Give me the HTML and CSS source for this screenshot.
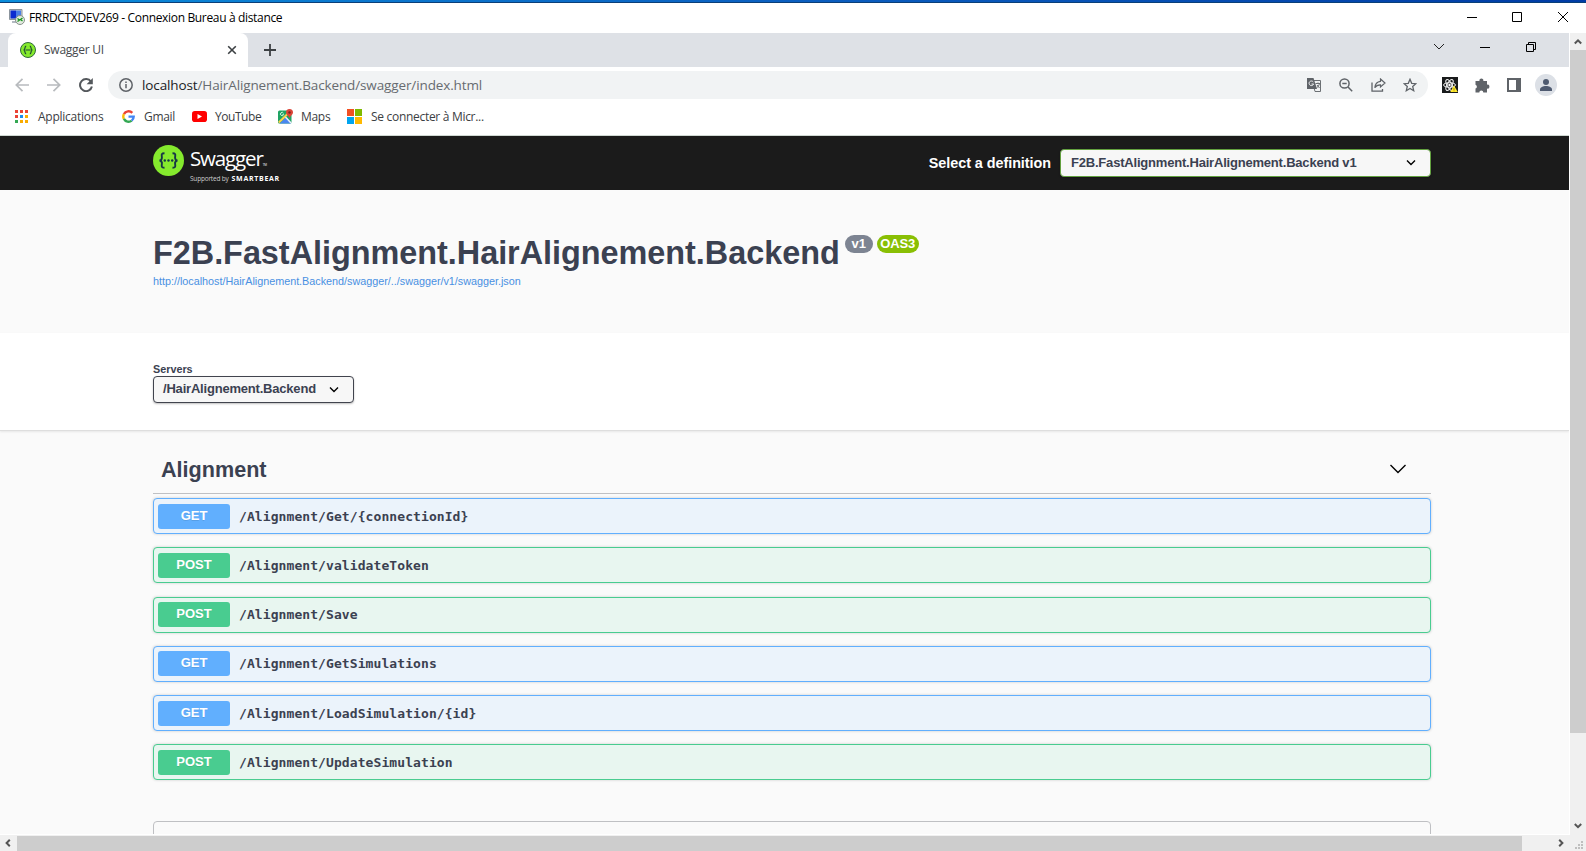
FILE: index.html
```html
<!DOCTYPE html>
<html lang="fr">
<head>
<meta charset="utf-8">
<title>FRRDCTXDEV269 - Connexion Bureau à distance</title>
<link rel="stylesheet" href="styles.css">
</head>
<body>
<div class="accent"></div>
<header class="titlebar">
  <svg class="rdp-icon" width="16" height="16" viewBox="0 0 16 16"><path d="M0.5 0.5H13V10.5H0.5z" fill="#c8cdd3" stroke="#8b949d"/><path d="M1.5 1.5H7V9.5H1.5z" fill="#0c2bd0"/><path d="M7 1.5H12V9.5H7z" fill="#4b7fe6"/><path d="M3 12h7v2H3z" fill="#b4bac2"/><circle cx="11" cy="11" r="4.5" fill="#e4ebe0" stroke="#87918b"/><path d="M8.5 9.500l2 1.500-2 1.500M13.500 9l-2 1.500 2 1.500" stroke="#16931c" stroke-width="1.300" fill="none"/></svg>
  <span class="window-name">FRRDCTXDEV269 - Connexion Bureau à distance</span>
  <div class="window-buttons">
    <svg width="10" height="10" viewBox="0 0 10 10"><path d="M0 5.500H10" stroke="#000"/></svg>
    <svg width="10" height="10" viewBox="0 0 10 10"><path d="M.5.5h9v9h-9z" stroke="#000" fill="none"/></svg>
    <svg width="10" height="10" viewBox="0 0 10 10"><path d="M0 0L10 10M10 0L0 10" stroke="#000"/></svg>
  </div>
</header>
<div class="workspace">
  <main class="remote">
    <div class="tabstrip">
      <div class="tab">
        <svg width="16" height="16" viewBox="0 0 16 16"><circle cx="8" cy="8" r="7.500" fill="#85ea2d" stroke="#2f6b3a"/><path d="M6.200 4.200C4.300 4.200 5.700 7.500 3.700 8c2 .5.600 3.800 2.500 3.800M9.800 4.200c1.900 0 .5 3.300 2.500 3.800-2 .5-.6 3.800-2.500 3.800M5.500 8h5" fill="none" stroke="#1d4a35" stroke-width="1.200"/></svg>
        <span class="tab-name">Swagger UI</span>
        <svg class="tab-close" width="10" height="10" viewBox="0 0 10 10"><path d="M1.200 1.200l7.600 7.600M8.800 1.200L1.200 8.800" stroke="#3c4043" stroke-width="1.600"/></svg>
      </div>
      <svg class="new-tab" width="12" height="12" viewBox="0 0 12 12"><path d="M6 0v12M0 6h12" stroke="#3c4043" stroke-width="1.800"/></svg>
      <div class="chrome-buttons">
        <svg width="10" height="10" viewBox="0 0 10 10"><path d="M0 2l5 5 5-5" stroke="#222" fill="none"/></svg>
        <svg width="10" height="10" viewBox="0 0 10 10"><path d="M0 5.500H10" stroke="#000"/></svg>
        <svg width="10" height="10" viewBox="0 0 10 10"><path d="M.5 2.500h7v7h-7zM2.500 2.500v-2h7v7h-2" stroke="#000" fill="none"/></svg>
      </div>
    </div>
    <div class="toolbar">
      <svg class="nav" width="14" height="14" viewBox="0 0 14 14"><path d="M14 7H1.500M7.500.8L1.300 7l6.200 6.200" stroke="#b8bbbe" stroke-width="1.700" fill="none"/></svg>
      <svg class="nav" width="14" height="14" viewBox="0 0 14 14"><path d="M0 7h12.500M6.500.8L12.700 7l-6.200 6.200" stroke="#b8bbbe" stroke-width="1.700" fill="none"/></svg>
      <svg class="nav" width="14" height="14" viewBox="0 0 14 14"><path d="M12 3.700A6 6 0 1 0 12.900 8.500" stroke="#54585c" stroke-width="2" fill="none"/><path d="M13.800 0v6.200H7.600z" fill="#54585c"/></svg>
      <div class="omnibox">
        <svg width="14" height="14" viewBox="0 0 14 14"><circle cx="7" cy="7" r="6.200" fill="none" stroke="#5f6368" stroke-width="1.500"/><path d="M7 6v4.300M7 3.500v1.600" stroke="#5f6368" stroke-width="1.500"/></svg>
        <span class="url"><b>localhost</b>/HairAlignement.Backend/swagger/index.html</span>
        <div class="page-actions">
          <svg width="15" height="14" viewBox="0 0 15 14"><path d="M5 2.500h8.500v11H8z" fill="#f1f3f4" stroke="#6b6f73"/><path d="M0 0h6.500l3.500 11H0z" fill="#5f6368"/><path d="M6.300 4A2.300 2.300 0 1 0 6.600 6H4.500" stroke="#f1f3f4" fill="none"/><path d="M8.500 5.500h4.500M11 4.500v1M12.500 5.500c-.5 2-1.500 3.500-3 4.500M10 7l2.500 3" stroke="#6b6f73" fill="none"/></svg>
          <svg width="14" height="14" viewBox="0 0 14 14"><circle cx="5.500" cy="5.500" r="4.600" fill="none" stroke="#5f6368" stroke-width="1.500"/><path d="M3.300 5.500h4.400M9 9l4.200 4.200" stroke="#5f6368" stroke-width="1.500"/></svg>
          <svg width="15" height="14" viewBox="0 0 15 14"><path d="M1 4.500v8.600h10.500V11" stroke="#5f6368" stroke-width="1.300" fill="none"/><path d="M9.500 1l4.500 4-4.500 4V6.800C7 6.700 5.200 7.500 3.800 9.800c.3-3.500 2.200-6.100 5.700-6.500z" stroke="#5f6368" stroke-width="1.200" fill="none"/></svg>
          <svg width="14" height="14" viewBox="0 0 14 14"><path d="M7 1.300l1.700 4 4.200.4-3.200 2.800 1 4.200L7 10.500l-3.700 2.200 1-4.200L1.100 5.700l4.200-.4z" stroke="#5f6368" stroke-width="1.300" fill="none"/></svg>
        </div>
      </div>
      <div class="extensions">
        <svg width="16" height="16" viewBox="0 0 16 16"><path d="M0 0h16v16H0z" fill="#191b1c"/><g fill="none" stroke="#f4f4f4" stroke-width="1"><ellipse cx="7.500" cy="8" rx="6" ry="2.300"/><ellipse cx="7.500" cy="8" rx="6" ry="2.300" transform="rotate(60 7.500 8)"/><ellipse cx="7.500" cy="8" rx="6" ry="2.300" transform="rotate(120 7.500 8)"/></g><circle cx="7.500" cy="8" r="1.200" fill="#fff"/><path d="M12 8.500l3.800 6.500H8.300z" fill="#ffe92e"/><path d="M12 11v2M12 13.400v.9" stroke="#a49000"/></svg>
        <svg width="15" height="15" viewBox="0 0 15 15"><path d="M.5 3h4a2 2 0 1 1 3.800 0H12v3.700a2 2 0 1 1 0 3.900v4H8.300a2 2 0 0 0-4 0H.5v-4a2 2 0 0 0 0-3.800z" fill="#5f6368"/></svg>
        <svg width="14" height="14" viewBox="0 0 14 14"><path d="M1 1h12v12H1z" fill="none" stroke="#5f6368" stroke-width="2"/><path d="M9 1h4v12H9z" fill="#5f6368"/></svg>
        <svg width="22" height="22" viewBox="0 0 22 22"><circle cx="11" cy="11" r="11" fill="#dce0e6"/><circle cx="11" cy="8" r="3" fill="#4e5a70"/><path d="M5 17v-1.500c0-2 3-3.500 6-3.500s6 1.500 6 3.500V17z" fill="#4e5a70"/></svg>
      </div>
    </div>
    <nav class="bookmarks">
      <a class="bm bm-apps"><svg width="13" height="13" viewBox="0 0 13 13"><path d="M0 0h3v3H0zM5 0h3v3H5zM10 0h3v3h-3zM0 5h3v3H0z" fill="#ea4335"/><path d="M5 5h3v3H5z" fill="#1a8cf0"/><path d="M10 5h3v3h-3zM5 10h3v3H5zM10 10h3v3h-3z" fill="#f9ab00"/><path d="M0 10h3v3H0z" fill="#34a853"/></svg><span>Applications</span></a>
      <a class="bm bm-gmail"><svg width="13" height="13" viewBox="0 0 13 13"><g fill="none" stroke-width="2.400"><path d="M10.300 2.900A5.200 5.200 0 0 0 1.900 4.100" stroke="#ea4335"/><path d="M1.900 4.100a5.200 5.200 0 0 0 0 4.800" stroke="#fbbc05"/><path d="M1.900 8.900a5.200 5.200 0 0 0 7.800 1.700" stroke="#34a853"/><path d="M9.700 10.600a5 5 0 0 0 2-4H6.500" stroke="#4285f4"/></g></svg><span>Gmail</span></a>
      <a class="bm bm-youtube"><svg width="15" height="11" viewBox="0 0 15 11"><rect width="15" height="11" rx="2.800" fill="#f00"/><path d="M5.500 3v5l4.500-2.500z" fill="#fff"/></svg><span>YouTube</span></a>
      <a class="bm bm-maps"><svg width="15" height="15" viewBox="0 0 15 15"><rect y="1.500" width="13.500" height="13" rx="1.500" fill="#1fa363"/><path d="M1.500 14.500l6-6 5.500 6z" fill="#4a86f0"/><path d="M.8 13.500L12 2.500" stroke="#fbd24a" stroke-width="2"/><path d="M7.500 8l5.500 6" stroke="#eef" stroke-width="1.500"/><path d="M5.500 4.300a1.600 1.600 0 1 0 .1 1.200H4.500" stroke="#d8f4e2" fill="none"/><path d="M11.500 0A3.500 3.500 0 0 1 15 3.500C15 6 12 6.500 11.500 9.500 11 6.500 8 6 8 3.500A3.500 3.500 0 0 1 11.500 0z" fill="#db4437"/><circle cx="11.500" cy="3.500" r="1.200" fill="#7b231e"/></svg><span>Maps</span></a>
      <a class="bm bm-micro"><svg width="15" height="15" viewBox="0 0 15 15"><path d="M0 0h7v7H0z" fill="#f25022"/><path d="M8 0h7v7H8z" fill="#7fba00"/><path d="M0 8h7v7H0z" fill="#00a4ef"/><path d="M8 8h7v7H8z" fill="#ffb900"/></svg><span>Se connecter à Micr...</span></a>
    </nav>
    <div class="swagger">
      <header class="topbar">
        <svg class="logo-mark" width="31" height="31" viewBox="0 0 31 31"><circle cx="15.500" cy="15.500" r="15.500" fill="#85ea2d"/><path d="M11.500 8.200C7.200 8.200 9.200 11 8.900 13c-.2 1.700-1 2.500-2.500 2.500 1.500 0 2.300.8 2.500 2.500.3 2-1.700 4.800 2.600 4.800M19.500 8.200c4.300 0 2.300 2.800 2.600 4.800.2 1.700 1 2.500 2.500 2.500-1.500 0-2.300.8-2.500 2.500-.3 2 1.700 4.800-2.600 4.800" fill="none" stroke="#173647" stroke-width="1.900"/><g fill="#173647"><circle cx="11.800" cy="15.500" r="1.200"/><circle cx="15.500" cy="15.500" r="1.200"/><circle cx="19.200" cy="15.500" r="1.200"/></g></svg>
        <div class="logo-text">
          <div class="logo-name">Swagger<small>TM</small></div>
          <div class="logo-by"><span>Supported by</span><b>SMARTBEAR</b></div>
        </div>
        <label class="def-label">Select a definition</label>
        <div class="select def-select"><span>F2B.FastAlignment.HairAlignement.Backend v1</span><svg width="10" height="8" viewBox="0 0 10 8"><path d="M1 2.500l4 4 4-4" stroke="#000" stroke-width="1.400" fill="none"/></svg></div>
      </header>
      <section class="info">
        <div class="heading"><h1>F2B.FastAlignment.HairAlignement.Backend</h1><span class="pill version">v1</span><span class="pill oas">OAS3</span></div>
        <a class="spec">http://localhost/HairAlignement.Backend/swagger/../swagger/v1/swagger.json</a>
      </section>
      <section class="servers">
        <label>Servers</label>
        <div class="select server-select"><span>/HairAlignement.Backend</span><svg width="10" height="8" viewBox="0 0 10 8"><path d="M1 2.500l4 4 4-4" stroke="#000" stroke-width="1.400" fill="none"/></svg></div>
      </section>
      <section class="operations">
        <div class="tag"><h2>Alignment</h2><svg width="16" height="10" viewBox="0 0 16 10"><path d="M.5 1L8 8.500 15.500 1" stroke="#000" stroke-width="1.400" fill="none"/></svg></div>
        <div class="ops">
          <div class="op get"><span class="verb">GET</span><code>/Alignment/Get/{connectionId}</code></div>
          <div class="op post"><span class="verb">POST</span><code>/Alignment/validateToken</code></div>
          <div class="op post"><span class="verb">POST</span><code>/Alignment/Save</code></div>
          <div class="op get"><span class="verb">GET</span><code>/Alignment/GetSimulations</code></div>
          <div class="op get"><span class="verb">GET</span><code>/Alignment/LoadSimulation/{id}</code></div>
          <div class="op post"><span class="verb">POST</span><code>/Alignment/UpdateSimulation</code></div>
        </div>
        <div class="models"></div>
      </section>
    </div>
  </main>
  <aside class="vscroll">
    <svg width="8" height="8" viewBox="0 0 8 8"><path d="M.8 5.500L4 2.300l3.200 3.200" stroke="#555" stroke-width="2" fill="none"/></svg>
    <div class="vthumb"></div>
    <svg class="down" width="8" height="8" viewBox="0 0 8 8"><path d="M.8 2L4 5.200 7.200 2" stroke="#555" stroke-width="2" fill="none"/></svg>
  </aside>
</div>
<footer class="hscroll">
  <svg width="8" height="8" viewBox="0 0 8 8"><path d="M5.800.8L2.600 4l3.200 3.200" stroke="#555" stroke-width="2" fill="none"/></svg>
  <div class="hthumb"></div>
  <svg class="right" width="8" height="8" viewBox="0 0 8 8"><path d="M2.200.8L5.400 4 2.200 7.200" stroke="#555" stroke-width="2" fill="none"/></svg>
  <svg class="grip" width="8" height="8" viewBox="0 0 8 8"><path d="M6 0h2v2H6zM3 3h2v2H3zM6 3h2v2H6zM0 6h2v2H0zM3 6h2v2H3zM6 6h2v2H6z" fill="#bfbfbf"/></svg>
</footer>
</body>
</html>
```
FILE: styles.css
```css
* { box-sizing: border-box; }
body {
  margin: 0;
  width: 1586px;
  height: 851px;
  overflow: hidden;
  background: #fff;
  font-family: "Open Sans", "Noto Sans", sans-serif;
  font-size: 12px;
  color: #000;
  white-space: nowrap;
}
svg { display: block; flex: none; }

.accent {
  height: 3px;
  background: linear-gradient(90deg, #0a8ddb, #0b5fc0 50%, #003ca5);
  border-bottom: 1px solid #0a3f78;
}
.titlebar {
  height: 30px;
  display: flex;
  align-items: center;
  padding: 0 18px 2px 9px;
}
.window-name { margin-left: 4px; letter-spacing: -0.34px; }
.window-buttons { margin-left: auto; display: flex; gap: 36px; }
.window-buttons svg:first-child { margin-right: -1px; }

.workspace { display: flex; height: 802px; }
.remote { width: 1569px; height: 801px; overflow: hidden; display: flex; flex-direction: column; }

.tabstrip { height: 34px; flex: none; background: #dee1e6; display: flex; padding-left: 8px; }
.tab {
  width: 240px;
  height: 34px;
  background: #fff;
  border-radius: 8px 8px 0 0;
  display: flex;
  align-items: center;
  padding: 0 11px 0 12px;
}
.tab-name { margin: -1px 0 0 8px; color: #45494d; letter-spacing: -0.25px; }
.tab-close { margin-left: auto; }
.new-tab { margin: 11px 0 0 16px; }
.chrome-buttons { margin: 9px 33px 0 auto; display: flex; gap: 36px; }

.toolbar { height: 36px; flex: none; display: flex; align-items: center; padding-left: 15px; }
.nav { margin-right: 18px; }
.nav:nth-child(3) { margin-right: 15px; }
.omnibox {
  width: 1320px;
  height: 28px;
  border-radius: 14px;
  background: #f1f3f4;
  display: flex;
  align-items: center;
  padding: 0 11px;
}
.url { margin-left: 9px; font-size: 13.500px; color: #676b70; letter-spacing: -0.12px; }
.url b { font-weight: 400; color: #202124; }
.page-actions { margin-left: auto; display: flex; gap: 17.500px; }
.extensions { margin-left: 14px; display: flex; align-items: center; gap: 17px; }
.extensions svg:last-child { margin-left: -3px; }

.bookmarks { height: 33px; flex: none; display: flex; align-items: center; padding: 0 0 5px 15px; border-bottom: 1px solid #cfd8d2; }
.bm { display: flex; align-items: center; gap: 10px; color: #3c4043; letter-spacing: -0.3px; }
.bm-apps { width: 107px; letter-spacing: -0.25px; }
.bm-gmail { width: 70px; gap: 9px; }
.bm-youtube { width: 86px; gap: 8px; letter-spacing: -0.45px; }
.bm-maps { width: 69px; gap: 8px; }
.bm-micro { gap: 9px; }

.swagger { flex: 1; min-height: 0; display: flex; flex-direction: column; font-family: "Liberation Sans", Arial, sans-serif; color: #3b4151; background: #fafafa; }
.topbar { height: 54px; flex: none; background: #1b1b1b; display: flex; align-items: center; padding: 0 138px 0 153px; }
.logo-mark { margin-top: -5px; }
.logo-text { width: 100px; margin-left: 6px; color: #fff; font-family: "Open Sans", sans-serif; }
.logo-name { font-size: 20.500px; font-weight: 400; line-height: 24px; letter-spacing: -1.150px; margin-top: 3px; }
.logo-name small { font-size: 3px; letter-spacing: 0; }
.logo-by { font-size: 6.500px; line-height: 9px; display: flex; gap: 3px; color: #ccc; margin-top: -3px; }
.logo-by span { letter-spacing: -0.2px; }
.logo-by b { color: #fff; font-size: 7px; letter-spacing: 0.7px; }
.def-label { margin-left: auto; margin-right: 9px; color: #fff; font-size: 14.400px; font-weight: 700; letter-spacing: -0.05px; }
.select {
  display: flex;
  align-items: center;
  border: 1px solid #41444e;
  border-radius: 4px;
  background: #f7f7f7;
  font-size: 13px;
  font-weight: 700;
  letter-spacing: -0.2px;
  box-shadow: 0 1px 2px rgba(0, 0, 0, .25);
}
.def-select { width: 371px; height: 28px; border-color: #62a03f; padding: 0 14px 2px 10px; justify-content: space-between; }
.info { height: 143px; flex: none; padding: 43px 0 0 153px; }
.heading { display: flex; align-items: flex-start; }
h1 { margin: 0; font-size: 32.400px; line-height: 40px; letter-spacing: -0.02px; }
.pill { height: 18px; border-radius: 9px; color: #fff; font-size: 13px; letter-spacing: -0.1px; font-weight: 700; line-height: 18px; text-align: center; margin-top: 2px; }
.version { width: 28px; background: #7d8492; margin-left: 5px; }
.oas { width: 42px; background: #89bf04; margin-left: 4px; }
.spec { display: block; font-size: 10.800px; line-height: 14px; color: #4990e2; margin-top: 1px; letter-spacing: -0.01px; }
.servers { height: 98px; flex: none; background: #fff; padding: 30px 0 0 153px; border-bottom: 1px solid #dedede; box-shadow: 0 1px 2px rgba(0, 0, 0, .08); }
.servers label { display: block; font-size: 10.800px; font-weight: 700; line-height: 13px; }
.server-select { width: 201px; height: 27px; padding: 0 14px 2px 9px; justify-content: space-between; }
.operations { padding: 0 138px 0 153px; }
.tag { height: 63px; border-bottom: 1px solid #bfc0c3; display: flex; align-items: center; justify-content: space-between; padding: 13px 25px 0 8px; }
h2 { margin: 3px 0 0; font-size: 21.600px; }
.ops { margin-top: 4px; display: flex; flex-direction: column; gap: 13.300px; }
.op { height: 36px; border: 1px solid #61affe; border-radius: 4px; background: #ebf3fb; display: flex; align-items: center; padding-left: 4px; box-shadow: 0 0 3px rgba(0, 0, 0, .19); }
.post { border-color: #49cc90; background: #e8f6f0; }
.verb { width: 72px; height: 25px; border-radius: 3px; background: #61affe; color: #fff; font-size: 13px; font-weight: 700; line-height: 24px; text-align: center; text-shadow: 0 1px 0 rgba(0, 0, 0, .1); }
.post .verb { background: #49cc90; }
code { margin: 1px 0 0 9px; font: 700 13px/16px "DejaVu Sans Mono", monospace; letter-spacing: 0.085px; }
.models { height: 60px; border: 1px solid #bfc0c3; border-radius: 4px; margin-top: 41px; }

.vscroll { width: 16px; height: 802px; margin-left: 1px; background: #f0f0f0; display: flex; flex-direction: column; align-items: center; padding-top: 5px; }
.vthumb { width: 16px; height: 683px; margin-top: 4px; background: #cdcdcd; }
.down { margin-top: 89px; }
.hscroll { height: 16px; background: #f0f0f0; display: flex; align-items: center; padding-left: 4px; }
.hthumb { width: 1505px; height: 15px; margin-left: 5px; background: #cdcdcd; }
.right { margin-left: 35px; }
.grip { margin: 4px 0 0 10px; }
```
